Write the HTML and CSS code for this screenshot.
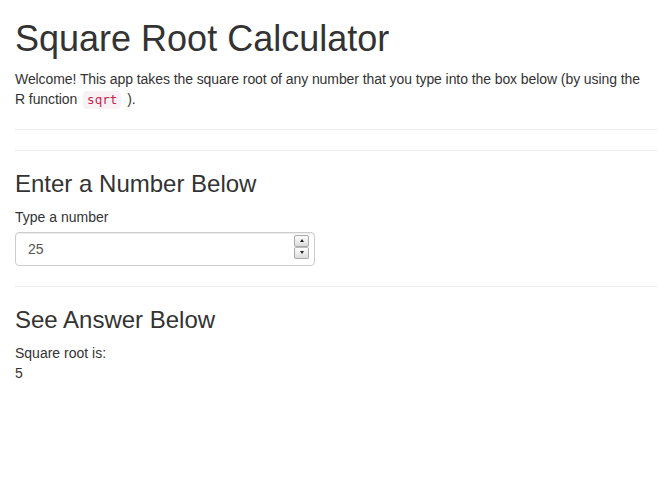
FILE: index.html
```html
<!DOCTYPE html>
<html>
<head>
<meta charset="utf-8">
<link rel="stylesheet" href="styles.css">
</head>
<body>
<div class="container">
  <h1 class="title">Square Root Calculator</h1>
  <p class="intro">Welcome! This app takes the square root of any number that you type into the box below (by using the R&nbsp;function <code>sqrt</code> ).</p>
  <hr>
  <hr>
  <h3 class="section">Enter a Number Below</h3>
  <div class="form-group">
    <label class="label" for="num">Type a number</label>
    <div class="input-wrap">
      <input id="num" class="form-control" type="number" value="25">
      <div class="spinner">
        <span class="spin-btn"><span class="tri-up"></span></span>
        <span class="spin-btn"><span class="tri-down"></span></span>
      </div>
    </div>
  </div>
  <hr>
  <h3 class="section">See Answer Below</h3>
  <div class="output-label">Square root is:</div>
  <div class="output-value">5</div>
</div>
</body>
</html>
```
FILE: styles.css
```css
* { box-sizing: border-box; }
html, body {
  margin: 0;
  padding: 0;
  background: #fff;
}
body {
  font-family: "Liberation Sans", Arial, Helvetica, sans-serif;
  font-size: 14px;
  line-height: 20px;
  color: #333;
}
.container {
  padding: 0 15px;
}
.title {
  font-size: 36px;
  font-weight: 500;
  line-height: 1.1;
  margin: 19px 0 10px;
}
.intro {
  margin: 0 0 10px;
  letter-spacing: -0.08px;
}
code {
  display: inline-block;
  font-family: "DejaVu Sans Mono", "Liberation Mono", monospace;
  font-size: 12.6px;
  line-height: 16px;
  padding: 1px 4px;
  margin: 0 2px;
  letter-spacing: 0;
  color: #c7254e;
  background: #f9f2f4;
  border-radius: 4px;
}
hr {
  margin: 20px 0;
  border: 0;
  border-top: 1px solid #eee;
  height: 0;
}
.section {
  font-size: 24px;
  font-weight: 500;
  line-height: 1.1;
  margin: 20px 0 10px;
}
.form-group {
  margin-bottom: 15px;
}
.label {
  display: block;
  margin-bottom: 5px;
  font-weight: normal;
}
.input-wrap {
  position: relative;
  width: 300px;
}
.form-control {
  display: block;
  width: 300px;
  height: 34px;
  padding: 6px 12px;
  font-family: "Liberation Sans", Arial, sans-serif;
  font-size: 14px;
  line-height: 20px;
  color: #555;
  background: #fff;
  border: 1px solid #ccc;
  border-radius: 4px;
  box-shadow: inset 0 1px 1px rgba(0,0,0,0.075);
  -moz-appearance: textfield;
}
.form-control::-webkit-inner-spin-button,
.form-control::-webkit-outer-spin-button {
  -webkit-appearance: none;
  margin: 0;
}
.spinner {
  position: absolute;
  top: 3px;
  left: 279px;
  width: 15px;
  height: 24px;
  display: flex;
  flex-direction: column;
}
.spin-btn {
  flex: 1;
  display: flex;
  align-items: center;
  justify-content: center;
  background: linear-gradient(#fdfdfd, #dcdcdc);
  border: 1px solid #a9a9a9;
  border-radius: 2px;
}
.spin-btn + .spin-btn {
  border-top-color: #bbb;
}
.tri-up {
  width: 0; height: 0;
  border-left: 2px solid transparent;
  border-right: 2px solid transparent;
  border-bottom: 3px solid #222;
}
.tri-down {
  width: 0; height: 0;
  border-left: 2px solid transparent;
  border-right: 2px solid transparent;
  border-top: 3px solid #222;
}
.output-label, .output-value {
  line-height: 20px;
}
```
